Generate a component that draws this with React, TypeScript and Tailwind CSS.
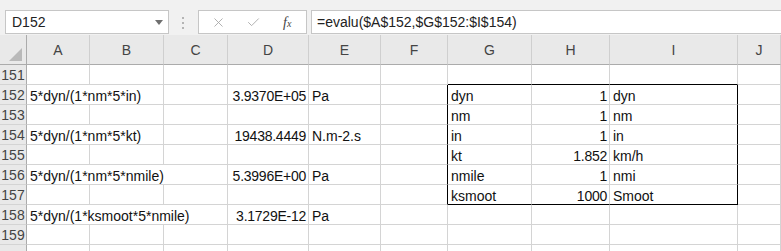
import React from 'react';
import { X, Check } from 'lucide-react';

const font = { fontFamily: '"Liberation Sans", Arial, sans-serif' };

type Row = {
  n: number;
  a?: string;
  span?: 1 | 2 | 3;
  d?: string;
  e?: string;
  g?: string;
  h?: string;
  i?: string;
};

const rows: Row[] = [
  { n: 151 },
  { n: 152, a: '5*dyn/(1*nm*5*in)', span: 2, d: '3.9370E+05', e: 'Pa', g: 'dyn', h: '1', i: 'dyn' },
  { n: 153, g: 'nm', h: '1', i: 'nm' },
  { n: 154, a: '5*dyn/(1*nm*5*kt)', span: 2, d: '19438.4449', e: 'N.m-2.s', g: 'in', h: '1', i: 'in' },
  { n: 155, g: 'kt', h: '1.852', i: 'km/h' },
  { n: 156, a: '5*dyn/(1*nm*5*nmile)', span: 3, d: '5.3996E+00', e: 'Pa', g: 'nmile', h: '1', i: 'nmi' },
  { n: 157, g: 'ksmoot', h: '1000', i: 'Smoot' },
  { n: 158, a: '5*dyn/(1*ksmoot*5*nmile)', span: 3, d: '3.1729E-12', e: 'Pa' },
  { n: 159 },
  { n: 160 },
];

const cols = ['A', 'B', 'C', 'D', 'E', 'F', 'G', 'H', 'I', 'J'];

const cell = 'h-[20px] border-r border-b border-[#d4d4d4] px-[3px] text-[14px] leading-[20px] pt-[1px] whitespace-nowrap overflow-hidden text-[#111]';
const num = 'text-right pl-0 pr-[2px] tracking-[-0.25px]';

const App: React.FC = () => {
  return (
    <div className="w-[781px] h-[251px] overflow-hidden bg-white" style={font}>
      {/* formula bar */}
      <div className="flex items-start bg-[#f1f1f1] pt-[10px] pb-[1px] pl-[5px] h-[35px]">
        <div className="relative flex items-center w-[164px] h-[24px] bg-white border border-[#c6c6c6] pl-[6px] text-[14px] text-[#222]">
          D152
          <svg className="absolute right-[5px] top-[9px]" width="8" height="5" viewBox="0 0 8 5">
            <path d="M0 0h8L4 5z" fill="#6f6f6f" />
          </svg>
        </div>
        <div className="flex flex-col gap-[3px] mt-[7px] ml-[13px] mr-[14px]">
          <div className="w-[2px] h-[2px] bg-[#b4b4b4]" />
          <div className="w-[2px] h-[2px] bg-[#b4b4b4]" />
          <div className="w-[2px] h-[2px] bg-[#b4b4b4]" />
        </div>
        <div className="flex items-center w-[109px] h-[24px] bg-white border border-[#c6c6c6] pl-[12px]">
          <X size={15} strokeWidth={1.4} color="#a6a6a6" />
          <Check size={15} strokeWidth={1.4} color="#a6a6a6" className="ml-[20px]" />
          <span className="ml-[22px] text-[14px] italic text-[#444]" style={{ fontFamily: '"Liberation Serif", serif' }}>
            f<span className="text-[10px]">x</span>
          </span>
        </div>
        <div className="flex items-center flex-1 h-[24px] ml-[4px] bg-white border border-r-0 border-[#c6c6c6] pl-[5px] text-[14px] text-[#222]">
          =evalu($A$152,$G$152:$I$154)
        </div>
      </div>

      <div className="grid grid-cols-[27px_63px_74px_64px_81px_72px_67px_84px_78px_128px_1fr]">
        {/* header row */}
        <div className="relative h-[30px] bg-[#e9e9e9] border-r border-b border-[#ababab]">
          <svg className="absolute right-[4px] bottom-[3px]" width="13" height="13" viewBox="0 0 13 13">
            <path d="M13 0V13H0z" fill="#b9b9b9" />
          </svg>
        </div>
        {cols.map((c) => (
          <div
            key={c}
            className="h-[30px] flex items-center justify-center bg-[#e9e9e9] border-r border-b border-r-[#cfcfcf] border-b-[#ababab] text-[14px] text-[#444] pt-[2px]"
          >
            {c}
          </div>
        ))}

        {rows.map((r) => {
          const inBox = r.n >= 152 && r.n <= 157;
          const boxBottom = r.n === 151 || r.n === 157;
          const gh = boxBottom ? 'border-b-black' : '';
          return (
            <React.Fragment key={r.n}>
              <div className="h-[20px] flex items-center justify-center bg-[#e9e9e9] border-r border-b border-r-[#ababab] border-b-[#d4d4d4] text-[14px] text-[#444] pt-[1px]">
                {r.n === 160 ? '' : r.n}
              </div>
              {r.span === 3 ? (
                <div className={`${cell} col-span-3`}>{r.a}</div>
              ) : r.span === 2 ? (
                <>
                  <div className={`${cell} col-span-2`}>{r.a}</div>
                  <div className={cell} />
                </>
              ) : (
                <>
                  <div className={cell} />
                  <div className={cell} />
                  <div className={cell} />
                </>
              )}
              <div className={`${cell} ${num}`}>{r.d}</div>
              <div className={cell}>{r.e}</div>
              <div className={`${cell} ${inBox ? 'border-r-black' : ''}`} />
              <div className={`${cell} ${gh}`}>{r.g}</div>
              <div className={`${cell} ${gh} ${num}`}>{r.h}</div>
              <div className={`${cell} ${gh} ${inBox ? 'border-r-black' : ''}`}>{r.i}</div>
              <div className={cell} />
            </React.Fragment>
          );
        })}
      </div>
    </div>
  );
};

export default App;
